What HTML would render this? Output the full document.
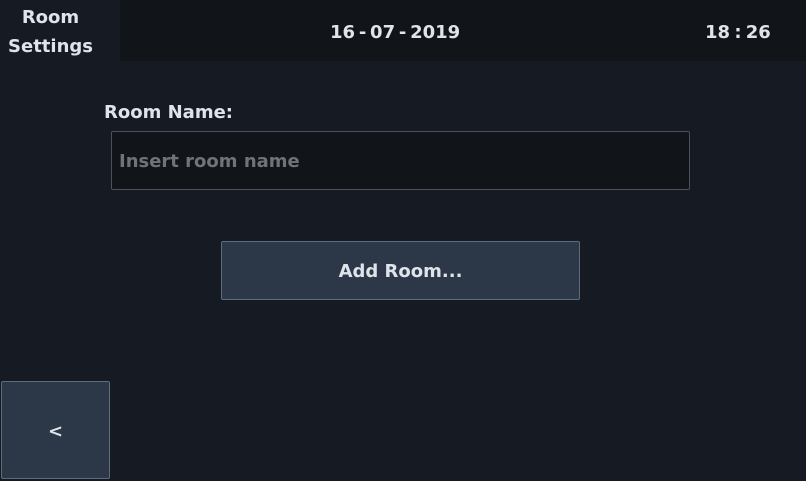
<!DOCTYPE html>
<html><head><style>
body{margin:0;width:806px;height:481px;background:#161b23;font-family:"DejaVu Sans","Liberation Sans",sans-serif;font-weight:bold;color:#dfe3ea;position:relative;overflow:hidden}
div{position:absolute;box-sizing:border-box}
.hdr{left:120px;top:0;width:686px;height:61px;background:#111418}
.t{font-size:18px;white-space:nowrap}
.btn{background:#2c3747;border:1px solid #5f6b7a;border-radius:2px;display:flex;align-items:center;justify-content:center;font-size:18px;padding-top:2px}
</style></head><body>
<div class="hdr"></div>
<div class="t" style="left:0;top:3px;width:101px;text-align:center;line-height:29px">Room<br>Settings</div>
<div class="t" style="left:330px;top:22px;word-spacing:-2.5px">16 - 07 - 2019</div>
<div class="t" style="left:705px;top:22px;word-spacing:-2px">18 : 26</div>
<div class="t" style="left:104px;top:102px">Room Name:</div>
<div style="left:111px;top:131px;width:579px;height:59px;background:#111418;border:1px solid #4a525c;border-radius:2px;color:#6f747b;font-size:18px;padding:19px 0 0 7px">Insert room name</div>
<div class="btn" style="left:221px;top:241px;width:359px;height:59px">Add Room...</div>
<div class="btn" style="left:1px;top:381px;width:109px;height:98px">&lt;</div>
</body></html>
